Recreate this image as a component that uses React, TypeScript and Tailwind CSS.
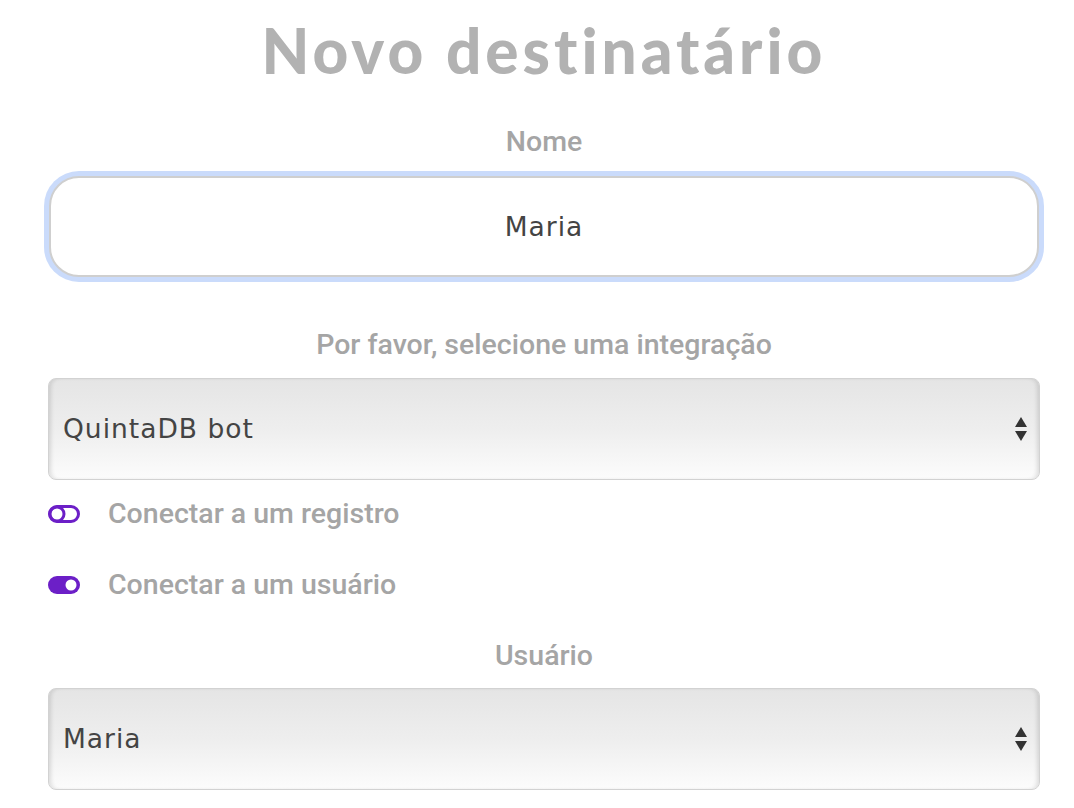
import React from "react";

const label = "font-['Roboto',_'Liberation_Sans',_sans-serif] font-medium text-[28.5px] leading-[34px] text-[#a5a5a5] text-center";
const value = "font-['DejaVu_Sans',_'Lato',_sans-serif] text-[26.5px] tracking-[1px] text-[#444]";

function Arrows() {
  return (
    <svg width="12" height="26" viewBox="0 0 12 26" className="shrink-0">
      <path d="M6 1 L12 11 L0 11 Z" fill="#333" />
      <path d="M0 15 L12 15 L6 25 Z" fill="#333" />
    </svg>
  );
}

function FakeSelect({ text }: { text: string }) {
  return (
    <div className="h-[102px] rounded-lg border border-[#d2d2d2] bg-gradient-to-b from-[#e5e5e5] via-[#eeeeee] to-[#fcfcfc] shadow-[inset_4px_0_4px_-2px_rgba(0,0,0,0.12),inset_-4px_0_4px_-2px_rgba(0,0,0,0.12)] flex items-center justify-between pl-[14px] pr-[12px]">
      <span className={value}>{text}</span>
      <Arrows />
    </div>
  );
}

function ToggleOff() {
  return (
    <svg width="32" height="18" viewBox="0 0 32 18">
      <rect x="1.5" y="1.5" width="29" height="15" rx="7.5" fill="none" stroke="#6c1fc7" strokeWidth="3" />
      <circle cx="9" cy="9" r="7" fill="none" stroke="#6c1fc7" strokeWidth="3" />
    </svg>
  );
}

function ToggleOn() {
  return (
    <svg width="32" height="18" viewBox="0 0 32 18">
      <rect x="0" y="0" width="32" height="18" rx="9" fill="#6c1fc7" />
      <circle cx="23" cy="9" r="5.5" fill="#fff" />
    </svg>
  );
}

export default function App() {
  return (
    <div className="min-h-[808px] bg-white pl-[48px] pr-[34px]">
      <h1 className="h-[100px] flex items-center justify-center font-['Lato',_sans-serif] font-black text-[62px] text-[#b2b2b2] tracking-[4px]">
        Novo destinatário
      </h1>

      <div className={`${label} h-[76px] pt-[25px]`}>Nome</div>

      <div className="mx-[1px] rounded-[30px] ring-[5px] ring-[#cadbfb] border-2 border-[#cfcfcf] bg-white h-[101px] flex items-center justify-center">
        <span className={value}>Maria</span>
      </div>

      <div className={`${label} h-[101px] pt-[51px]`}>Por favor, selecione uma integração</div>

      <FakeSelect text="QuintaDB bot" />

      <div className="flex flex-col mt-[17px] gap-[37px]">
        <div className="flex items-center h-[34px]">
          <ToggleOff />
          <span className={`${label} ml-[28px]`}>Conectar a um registro</span>
        </div>
        <div className="flex items-center h-[34px]">
          <ToggleOn />
          <span className={`${label} ml-[28px]`}>Conectar a um usuário</span>
        </div>
      </div>

      <div className={`${label} h-[86px] pt-[37px]`}>Usuário</div>

      <FakeSelect text="Maria" />
    </div>
  );
}
